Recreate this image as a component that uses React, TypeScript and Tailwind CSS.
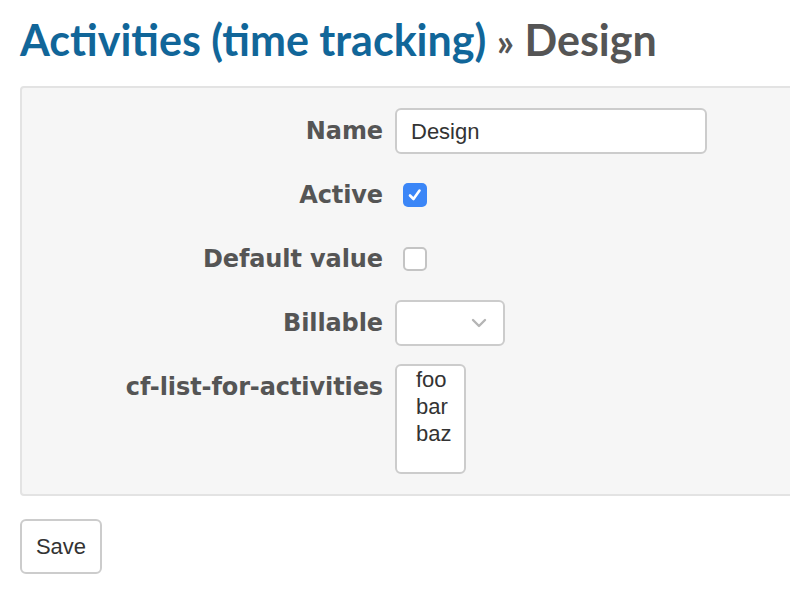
import React from "react";

function Row({ label, children }: { label: string; children: React.ReactNode }) {
  return (
    <div className="flex items-start">
      <div className="w-[373px] shrink-0 h-[46px] flex items-center justify-end pr-[12px] text-[24px] tracking-[-0.1px] font-bold text-[#555] font-['DejaVu_Sans',Verdana,sans-serif] whitespace-nowrap">
        {label}
      </div>
      <div className="min-h-[46px] flex items-center">{children}</div>
    </div>
  );
}

export default function App() {
  return (
    <div className="w-[790px] h-[597px] bg-white overflow-hidden font-['Liberation_Sans',Arial,sans-serif]">
      <h2 className="pl-[20px] pt-[14px] h-[72px] text-[43px] leading-[52px] font-bold text-[#555] font-['Lato',sans-serif] whitespace-nowrap">
        <span className="text-[#116699]">Activities (time tracking)</span> <span className="text-[38px]">»</span> Design
      </h2>
      <div className="ml-[20px] mr-[-10px] mt-[14px] border-2 border-[#e3e3e3] rounded-[4px] bg-[#f6f6f6] pt-[20px] pb-[20px] flex flex-col gap-[18px]">
        <Row label="Name">
          <div className="w-[312px] h-[46px] bg-white border-2 border-[#cccccc] rounded-[6px] flex items-center pl-[14px] text-[22px] text-[#333]">
            Design
          </div>
        </Row>
        <Row label="Active">
          <div className="ml-[8px] w-[24px] h-[24px] rounded-[5px] bg-[#3b86f7] flex items-center justify-center">
            <svg width="18" height="18" viewBox="0 0 18 18">
              <path d="M4 9.5 L7.5 13 L13.5 4.5" fill="none" stroke="white" strokeWidth="2.6" strokeLinecap="round" strokeLinejoin="round" />
            </svg>
          </div>
        </Row>
        <Row label="Default value">
          <div className="ml-[8px] w-[24px] h-[24px] rounded-[5px] bg-white border-2 border-[#c4c4c4]" />
        </Row>
        <Row label="Billable">
          <div className="w-[110px] h-[46px] bg-white border-2 border-[#cccccc] rounded-[6px] flex items-center justify-end pr-[16px]">
            <svg width="16" height="10" viewBox="0 0 16 10">
              <path d="M2 2 L8 8 L14 2" fill="none" stroke="#b5b5b5" strokeWidth="2.4" strokeLinecap="round" strokeLinejoin="round" />
            </svg>
          </div>
        </Row>
        <Row label="cf-list-for-activities">
          <div className="w-[71px] h-[110px] bg-white border-2 border-[#cccccc] rounded-[6px] pl-[19px] flex flex-col items-start text-[22px] leading-[27px] text-[#333]">
            <span>foo</span>
            <span>bar</span>
            <span>baz</span>
          </div>
        </Row>
      </div>
      <div className="pl-[20px] pt-[23px]">
        <button className="w-[82px] h-[55px] bg-white border-2 border-[#cccccc] rounded-[6px] text-[22px] text-[#333]">
          Save
        </button>
      </div>
    </div>
  );
}
